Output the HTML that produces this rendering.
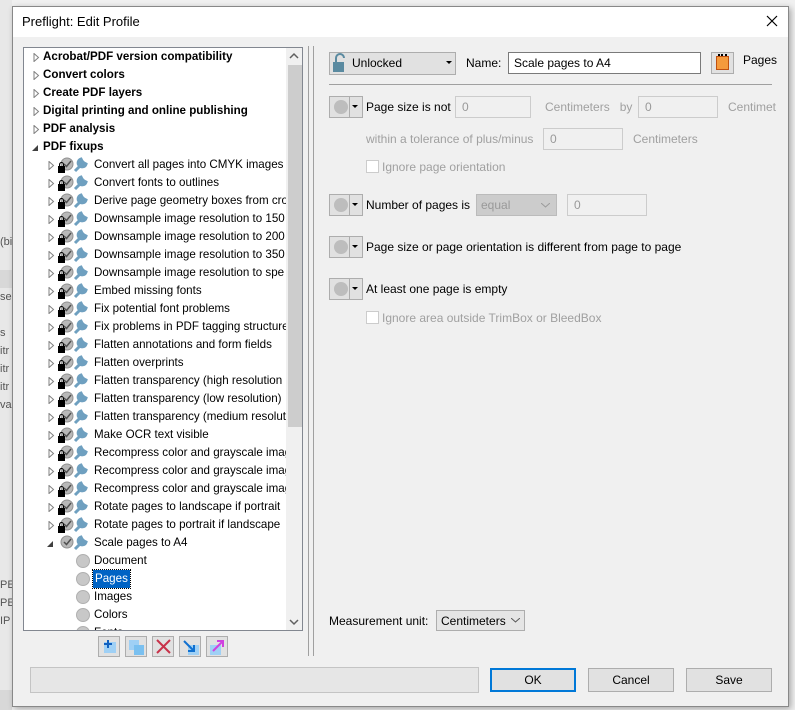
<!DOCTYPE html>
<html><head><meta charset="utf-8"><style>
*{box-sizing:border-box;margin:0;padding:0}
body{width:795px;height:710px;background:#f0f0f0;position:relative;overflow:hidden;font-family:"Liberation Sans",sans-serif;font-size:12px;color:#000}
.abs{position:absolute}
.dlg{left:12px;top:6px;width:777px;height:701px;background:#f0f0f0;border:1px solid #888;box-shadow:2px 2px 6px rgba(0,0,0,.3)}
.title{left:13px;top:7px;width:775px;height:30px;background:#fff}
.tree{left:23px;top:47px;width:280px;height:584px;background:#fff;border:1px solid #828790;overflow:hidden}
.rows{position:absolute;left:0;top:0;width:262px;height:582px;overflow:hidden}
.row{position:absolute;height:18px;line-height:18px;white-space:nowrap;font-size:11.6px}
.b{font-weight:bold}
.trio{position:absolute;width:7px;height:9px}
.sb{position:absolute;left:262px;top:0;width:16px;height:582px;background:#f0f0f0}
.thumb{position:absolute;left:264px;top:17px;width:14px;height:362px;background:#cdcdcd}
.dim{color:#a0a0a0}
.inp{position:absolute;background:#f0f0f0;border:1px solid #ccc;height:22px;padding:3px 6px;color:#999}
.rb{position:absolute;width:34px;height:22px;border:1px solid #adadad;background:#e1e1e1}
.btn{position:absolute;height:24px;border:1px solid #adadad;background:#e1e1e1;text-align:center;line-height:22px}
.cb{position:absolute;width:13px;height:13px;border:1px solid #ccc;background:#fff}
.tb{position:absolute;top:636px;width:22px;height:21px;border:1px solid #adadad;background:#e1e1e1}
</style></head><body>
<div class="abs" style="left:0;top:0;width:12px;height:710px;background:#e8e8e8"></div>
<div class="abs" style="left:0;top:270px;width:12px;height:18px;background:#d8d8d8"></div>
<div class="abs" style="left:0;top:690px;width:12px;height:20px;background:#d8d8d8"></div>
<div class="abs" style="left:0;top:236px;font-size:11px;color:#555">(bi</div>
<div class="abs" style="left:0;top:291px;font-size:11px;color:#555">se</div>
<div class="abs" style="left:0;top:327px;font-size:11px;color:#555">s</div>
<div class="abs" style="left:0;top:345px;font-size:11px;color:#555">itr</div>
<div class="abs" style="left:0;top:363px;font-size:11px;color:#555">itr</div>
<div class="abs" style="left:0;top:381px;font-size:11px;color:#555">itr</div>
<div class="abs" style="left:0;top:399px;font-size:11px;color:#555">va</div>
<div class="abs" style="left:0;top:579px;font-size:11px;color:#555">PE</div>
<div class="abs" style="left:0;top:597px;font-size:11px;color:#555">PE</div>
<div class="abs" style="left:0;top:615px;font-size:11px;color:#555">IP</div>
<div class="abs dlg"></div>
<div class="abs title"></div>
<div class="abs" style="left:22px;top:14px;font-size:13px">Preflight: Edit Profile</div>
<svg class="abs" style="left:766px;top:15px" width="12" height="12"><path d="M1 1L11 11M11 1L1 11" stroke="#000" stroke-width="1.2"/></svg>

<div class="abs tree">
<div class="sb"></div><div class="thumb"></div>
<svg class="abs" style="left:265px;top:4px" width="10" height="8"><path d="M1 6L5 2L9 6" stroke="#606060" fill="none" stroke-width="1.5"/></svg>
<svg class="abs" style="left:265px;top:570px" width="10" height="8"><path d="M1 2L5 6L9 2" stroke="#606060" fill="none" stroke-width="1.5"/></svg>
<div class="rows" id="rows"></div>
</div>

<div class="abs" style="left:308px;top:46px;width:1px;height:610px;background:#a0a0a0"></div>
<div class="abs" style="left:313px;top:46px;width:1px;height:610px;background:#a0a0a0"></div>

<div class="btn" style="left:329px;top:52px;width:127px;height:23px;text-align:left;padding-left:22px;line-height:21px">Unlocked</div>
<svg class="abs" style="left:332px;top:53px" width="18" height="20"><path d="M4 9V5a4 4 0 0 1 8 0" stroke="#5a8aa0" stroke-width="2" fill="none"/><rect x="1" y="9" width="11" height="10" fill="#5a8aa0"/></svg>
<svg class="abs" style="left:446px;top:61px" width="6" height="4"><path d="M0 0H6L3 3Z"/></svg>
<div class="abs" style="left:466px;top:56px">Name:</div>
<div class="abs" style="left:508px;top:52px;width:193px;height:22px;background:#fff;border:1px solid #7a7a7a;padding:3px 5px">Scale pages to A4</div>
<div class="btn" style="left:711px;top:52px;width:23px;height:22px"></div>
<div class="abs" style="left:716px;top:56px;width:13px;height:14px;background:#f59a3c;border:1px solid #c05010"></div>
<div class="abs" style="left:718px;top:54px;width:9px;height:3px;border-top:2px dotted #000"></div>
<div class="abs" style="left:743px;top:53px">Pages</div>
<div class="abs" style="left:329px;top:84px;width:443px;height:1px;background:#a0a0a0"></div>

<div id="rules"></div>
<div class="abs" style="left:366px;top:100px">Page size is not</div>
<div class="inp" style="left:455px;top:96px;width:76px">0</div>
<div class="abs dim" style="left:545px;top:100px">Centimeters &nbsp;&nbsp;by</div>
<div class="inp" style="left:638px;top:96px;width:80px">0</div>
<div class="abs dim" style="left:728px;top:100px">Centimet</div>
<div class="abs dim" style="left:366px;top:132px">within a tolerance of plus/minus</div>
<div class="inp" style="left:543px;top:128px;width:80px">0</div>
<div class="abs dim" style="left:633px;top:132px">Centimeters</div>
<div class="cb" style="left:366px;top:160px"></div>
<div class="abs dim" style="left:382px;top:160px">Ignore page orientation</div>

<div class="abs" style="left:366px;top:198px">Number of pages is</div>
<div class="abs" style="left:476px;top:194px;width:81px;height:22px;background:#ccc;border:1px solid #bbb;padding:3px 4px;color:#999">equal</div>
<svg class="abs" style="left:541px;top:203px" width="9" height="5"><path d="M0 0L4.5 4L9 0" stroke="#999" fill="none"/></svg>
<div class="inp" style="left:567px;top:194px;width:80px">0</div>
<div class="abs" style="left:366px;top:240px">Page size or page orientation is different from page to page</div>
<div class="abs" style="left:366px;top:282px">At least one page is empty</div>
<div class="cb" style="left:366px;top:311px"></div>
<div class="abs dim" style="left:382px;top:311px">Ignore area outside TrimBox or BleedBox</div>

<div class="abs" style="left:329px;top:614px">Measurement unit:</div>
<div class="abs" style="left:436px;top:610px;width:89px;height:21px;border:1px solid #adadad;background:#e5e5e5;padding:3px 4px">Centimeters</div>
<svg class="abs" style="left:511px;top:618px" width="9" height="5"><path d="M0 0L4.5 4L9 0" stroke="#555" fill="none"/></svg>

<div class="tb" style="left:98px"><span class="abs" style="left:5px;top:5px;width:12px;height:11px;background:#9fd0f5"></span><svg class="abs" style="left:4px;top:2px" width="10" height="10"><path d="M5 1V9M1 5H9" stroke="#1060c0" stroke-width="2"/></svg></div>
<div class="tb" style="left:125px"><span class="abs" style="left:3px;top:3px;width:10px;height:10px;background:#9fd0f5"></span><span class="abs" style="left:8px;top:8px;width:10px;height:10px;background:#7ac0f0"></span></div>
<div class="tb" style="left:152px"><svg class="abs" style="left:3px;top:2px" width="15" height="15"><path d="M1 1L14 14M14 1L1 14" stroke="#c8324a" stroke-width="2"/></svg></div>
<div class="tb" style="left:179px"><span class="abs" style="left:8px;top:8px;width:11px;height:10px;background:#9fd0f5"></span><svg class="abs" style="left:2px;top:2px" width="16" height="16"><path d="M2 2L12 12M6 12H12V6" stroke="#1070d0" stroke-width="2" fill="none"/></svg></div>
<div class="tb" style="left:206px"><span class="abs" style="left:3px;top:8px;width:11px;height:10px;background:#9fd0f5"></span><svg class="abs" style="left:3px;top:1px" width="16" height="16"><path d="M3 13L13 3M7 3H13V9" stroke="#d040e0" stroke-width="2" fill="none"/></svg></div>

<div class="abs" style="left:30px;top:667px;width:449px;height:26px;border:1px solid #c4c4c4;background:#e6e6e6"></div>
<div class="btn" style="left:490px;top:668px;width:86px;border:2px solid #0078d7;line-height:20px">OK</div>
<div class="btn" style="left:588px;top:668px;width:86px">Cancel</div>
<div class="btn" style="left:686px;top:668px;width:86px">Save</div>

<script>
var items=[["Acrobat/PDF version compatibility",0],["Convert colors",0],["Create PDF layers",0],["Digital printing and online publishing",0],["PDF analysis",0],["PDF fixups",2],
["Convert all pages into CMYK images a",1],["Convert fonts to outlines",1],["Derive page geometry boxes from cro",1],["Downsample image resolution to 150",1],["Downsample image resolution to 200",1],["Downsample image resolution to 350",1],["Downsample image resolution to spe",1],["Embed missing fonts",1],["Fix potential font problems",1],["Fix problems in PDF tagging structure",1],["Flatten annotations and form fields",1],["Flatten overprints",1],["Flatten transparency (high resolution",1],["Flatten transparency (low resolution)",1],["Flatten transparency (medium resolut",1],["Make OCR text visible",1],["Recompress color and grayscale imag",1],["Recompress color and grayscale imag",1],["Recompress color and grayscale imag",1],["Rotate pages to landscape if portrait",1],["Rotate pages to portrait if landscape",1],["Scale pages to A4",3],["Document",4],["Pages",5],["Images",4],["Colors",4],["Fonts",4]];
var h="";
var triOpen='<svg class="trio" viewBox="0 0 7 9"><path d="M6 2V8H0Z" fill="#404040"/></svg>';
var triClosed='<svg class="trio" viewBox="0 0 7 9"><path d="M1 0.5L5.5 4.5L1 8.5Z" fill="#fff" stroke="#808080"/></svg>';
function icons(x,y,lock){var s='<svg class="abs" style="left:'+x+'px;top:'+y+'px" width="36" height="18"><circle cx="10" cy="8" r="6" fill="#b8b8b8" stroke="#909090"/><path d="M7 8L9.5 10.5L14 5" stroke="#505050" stroke-width="1.5" fill="none"/>';
if(lock)s+='<rect x="1" y="10" width="7" height="7" fill="#000"/><path d="M2.5 10V8.5a2 2 0 0 1 4 0V10" stroke="#000" fill="none"/>';
s+='<path d="M18 15L25 8M24 3a4 4 0 1 0 5 5l-2-1-2-2z" stroke="#6fa0c0" stroke-width="3" fill="#6fa0c0"/></svg>';return s;}
items.forEach(function(it,i){var y=i*18;var t=it[1];
if(t==0){h+='<div class="abs" style="left:9px;top:'+(y+5)+'px">'+triClosed+'</div><div class="row b" style="left:19px;top:'+y+'px">'+it[0]+'</div>';}
else if(t==2){h+='<div class="abs" style="left:8px;top:'+(y+5)+'px">'+triOpen+'</div><div class="row b" style="left:19px;top:'+y+'px">'+it[0]+'</div>';}
else if(t==1){h+='<div class="abs" style="left:24px;top:'+(y+5)+'px">'+triClosed+'</div>'+icons(33,y,1)+'<div class="row" style="left:70px;top:'+y+'px">'+it[0]+'</div>';}
else if(t==3){h+='<div class="abs" style="left:23px;top:'+(y+5)+'px">'+triOpen+'</div>'+icons(33,y,0)+'<div class="row" style="left:70px;top:'+y+'px">'+it[0]+'</div>';}
else{h+='<div class="abs" style="left:52px;top:'+(y+2)+'px;width:14px;height:14px;border-radius:50%;background:#c8c8c8;border:1px solid #b0b0b0"></div>';
if(t==5)h+='<div class="row" style="left:69px;top:'+y+'px;background:#0063c4;color:#fff;padding:0 2px;outline:1px dotted #000">'+it[0]+'</div>';
else h+='<div class="row" style="left:70px;top:'+y+'px">'+it[0]+'</div>';}
});
document.getElementById("rows").innerHTML=h;
var r="";[96,194,236,278].forEach(function(y){r+='<div class="rb" style="left:329px;top:'+y+'px"></div><div class="abs" style="left:334px;top:'+(y+4)+'px;width:14px;height:14px;border-radius:50%;background:#bdbdbd"></div><div class="abs" style="left:349px;top:'+y+'px;width:1px;height:22px;background:#adadad"></div><svg class="abs" style="left:352px;top:'+(y+9)+'px" width="6" height="4"><path d="M0 0H6L3 3Z"/></svg>';});
document.getElementById("rules").innerHTML=r;
</script>
</body></html>
